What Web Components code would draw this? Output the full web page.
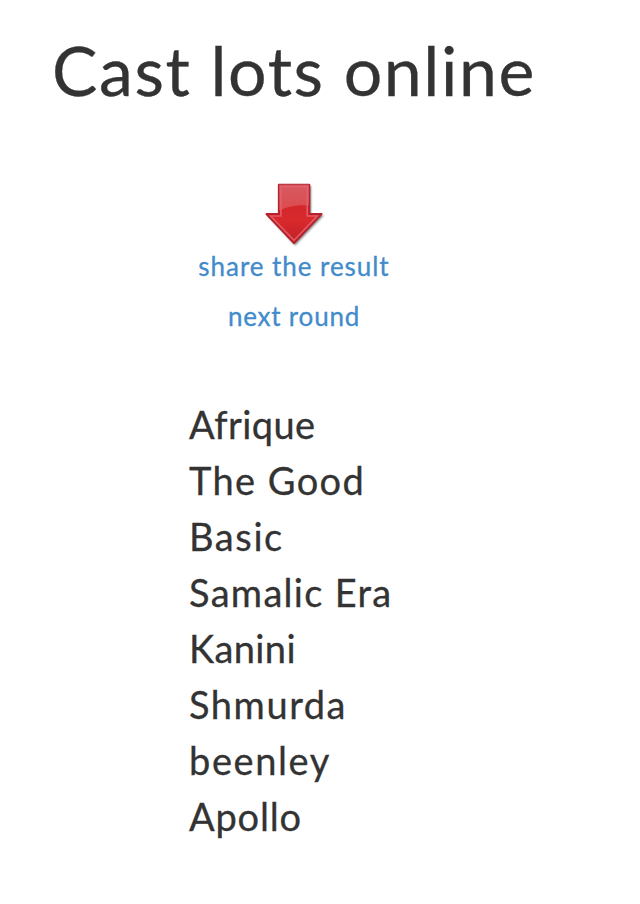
<!DOCTYPE html>
<html lang="en">
<head>
  <meta charset="utf-8">
  <title>Cast lots online</title>
  <style>
    body {
      margin: 0;
      background: #fff;
      color: #333;
      font-family: Lato, "Open Sans", sans-serif;
    }
  </style>
</head>
<body>
  <lots-page>
    <span slot="title">Cast lots online</span>
    <down-arrow slot="actions"></down-arrow>
    <lots-link slot="actions" style="--spacing: 0.95px">share the result</lots-link>
    <lots-link slot="actions" style="--spacing: 0.8px">next round</lots-link>
    <lots-item>Afrique</lots-item>
    <lots-item style="--spacing: 1.4px">The Good</lots-item>
    <lots-item style="--spacing: 1.6px">Basic</lots-item>
    <lots-item style="--spacing: 1.3px">Samalic Era</lots-item>
    <lots-item>Kanini</lots-item>
    <lots-item style="--spacing: 1.55px">Shmurda</lots-item>
    <lots-item style="--spacing: 1.6px">beenley</lots-item>
    <lots-item style="--spacing: 0.8px">Apollo</lots-item>
  </lots-page>

  <script>
    class LotsPage extends HTMLElement {
      constructor() {
        super();
        this.attachShadow({mode: 'open'});
        this.shadowRoot.innerHTML = `
          <style>
            :host {
              display: flex;
              flex-direction: column;
              align-items: center;
              box-sizing: border-box;
              width: 588px;
              padding-top: 30px;
            }

            h1 {
              margin: 0;
              font-size: 68px;
              font-weight: 400;
              line-height: 80px;
              letter-spacing: 1.6px;
              white-space: nowrap;
              -webkit-text-stroke: 0.3px currentColor;
            }

            nav {
              display: flex;
              flex-direction: column;
              align-items: center;
              margin-top: 72px;
            }

            section {
              width: 210px;
              margin-top: 55px;
            }
          </style>
          <h1><slot name="title"></slot></h1>
          <nav><slot name="actions"></slot></nav>
          <section><slot></slot></section>
        `;
      }
    }

    class DownArrow extends HTMLElement {
      constructor() {
        super();
        this.attachShadow({mode: 'open'});
        this.shadowRoot.innerHTML = `
          <style>
            :host {
              display: block;
              height: 59px;
            }

            svg {
              display: block;
              overflow: visible;
            }
          </style>
          <svg width="64" height="64" viewBox="0 0 64 64" aria-hidden="true">
            <defs>
              <linearGradient id="fill" x1="0" y1="0" x2="0" y2="1">
                <stop offset="0" stop-color="#c9252c"/>
                <stop offset=".6" stop-color="#d9292d"/>
                <stop offset="1" stop-color="#bd2026"/>
              </linearGradient>
              <linearGradient id="gloss" x1="0" y1="0" x2="0" y2="1">
                <stop offset="0" stop-color="#fff" stop-opacity=".25"/>
                <stop offset="1" stop-color="#fff" stop-opacity=".16"/>
              </linearGradient>
              <clipPath id="inside"><path d="M17 2.500H47V31.500H58L32 59L6 31.500H17Z"/></clipPath>
              <filter id="shadow" x="-20%" y="-20%" width="140%" height="140%">
                <feGaussianBlur stdDeviation="1.300"/>
              </filter>
            </defs>
            <path d="M17 4H49V33H62L33 63.500L5 33H17Z" fill="#000" opacity=".5" filter="url(#shadow)"/>
            <path d="M16.900 2.800H47.300V32H59.500L32 61L4.500 32H16.900Z" fill="url(#fill)" stroke="#b5202b" stroke-width="2" stroke-linejoin="round"/>
            <g clip-path="url(#inside)">
              <path d="M15 1H49V24C36 22 24 25 16 29H15Z" fill="url(#gloss)"/>
            </g>
            <path d="M18.900 4.700H45.300V34H55.300L32 58.300L8.700 34H18.900Z" fill="none" stroke="#e8606c" stroke-width="1.700" opacity=".85"/>
          </svg>
        `;
      }
    }

    class LotsLink extends HTMLElement {
      constructor() {
        super();
        this.attachShadow({mode: 'open'});
        this.shadowRoot.innerHTML = `
          <style>
            :host {
              display: block;
              font-size: 26px;
              line-height: 50px;
              letter-spacing: var(--spacing, 0);
              -webkit-text-stroke: 0.3px #428bca;
            }

            a {
              color: #428bca;
              text-decoration: none;
            }
          </style>
          <a href="#"><slot></slot></a>
        `;
      }
    }

    class LotsItem extends HTMLElement {
      constructor() {
        super();
        this.attachShadow({mode: 'open'});
        this.shadowRoot.innerHTML = `
          <style>
            :host {
              display: block;
              font-size: 38px;
              line-height: 56px;
              letter-spacing: var(--spacing, 0.4px);
              white-space: nowrap;
              -webkit-text-stroke: 0.3px currentColor;
            }
          </style>
          <slot></slot>
        `;
      }
    }

    customElements.define('lots-page', LotsPage);
    customElements.define('down-arrow', DownArrow);
    customElements.define('lots-link', LotsLink);
    customElements.define('lots-item', LotsItem);
  </script>
</body>
</html>
